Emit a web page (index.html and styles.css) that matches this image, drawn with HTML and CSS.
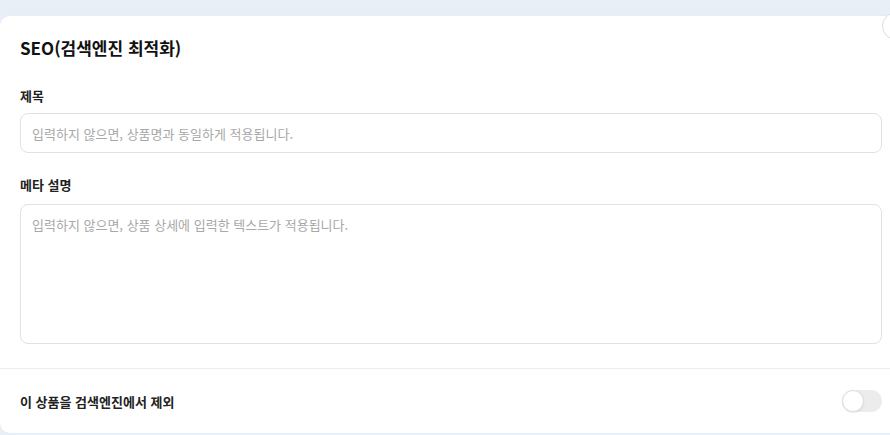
FILE: index.html
```html
<!DOCTYPE html>
<html lang="ko">
<head>
    <meta charset="UTF-8">
    <meta name="viewport" content="width=device-width, initial-scale=1.0">
    <title>SEO 설정</title>
    <link rel="stylesheet" href="styles.css">
</head>
<body>

<div class="page">
    <div class="card">
        <!-- SEO 입력 영역 -->
        <div class="section">
            <h2 class="section-title">SEO(검색엔진 최적화)</h2>

            <label class="field-label" for="seoTitle">제목</label>
            <input class="text-input" id="seoTitle" type="text" placeholder="입력하지 않으면, 상품명과 동일하게 적용됩니다.">

            <label class="field-label meta" for="seoDesc">메타 설명</label>
            <textarea class="text-area" id="seoDesc" placeholder="입력하지 않으면, 상품 상세에 입력한 텍스트가 적용됩니다."></textarea>
        </div>

        <!-- 검색엔진 제외 토글 -->
        <div class="toggle-row">
            <span class="toggle-label">이 상품을 검색엔진에서 제외</span>
            <label class="switch">
                <input type="checkbox">
                <span class="slider"></span>
            </label>
        </div>

        <button class="corner-button" aria-label="닫기"></button>
    </div>
</div>

</body>
</html>
```

FILE: styles.css
```css
html, body {
    margin: 0;
    overflow: hidden;
}

body {
    font-family: "Noto Sans CJK KR", "Noto Sans", sans-serif;
    background-color: #e9eff6;
    color: #1a1a1a;
}

.page {
    padding-top: 16px;
    height: 435px;
    box-sizing: border-box;
}

.card {
    position: relative;
    width: 902px;
    background-color: #fff;
    border-radius: 10px;
    box-shadow: 0 0 2px rgba(0, 0, 0, 0.04);
}

.section {
    padding: 20px 20px 24px;
    border-bottom: 1px solid #ececec;
}

.section-title {
    margin: 0 0 26px;
    font-size: 17px;
    line-height: 24px;
    font-weight: 700;
    color: #111;
}

.field-label {
    display: block;
    font-size: 13px;
    line-height: 20px;
    font-weight: 700;
    color: #222;
    margin-bottom: 7px;
}

.field-label.meta {
    margin-top: 22px;
    margin-bottom: 9px;
}

.text-input,
.text-area {
    display: block;
    width: 100%;
    box-sizing: border-box;
    border: 1px solid #e2e2e2;
    border-radius: 8px;
    padding: 0 11px;
    font-family: inherit;
    font-size: 13px;
    color: #222;
    background: #fff;
    outline: none;
}

.text-input {
    height: 40px;
}

.text-area {
    height: 140px;
    padding-top: 10px;
    resize: none;
}

.text-input::placeholder,
.text-area::placeholder {
    color: #a8a8a8;
}

.toggle-row {
    display: flex;
    align-items: center;
    justify-content: space-between;
    height: 64px;
    padding: 0 20px;
}

.toggle-label {
    font-size: 13px;
    font-weight: 700;
    color: #222;
}

/* Toggle Switch */
.switch {
    position: relative;
    width: 40px;
    height: 22px;
    display: inline-block;
}

.switch input {
    display: none;
}

.slider {
    position: absolute;
    inset: 0;
    background-color: #ececec;
    border-radius: 11px;
    cursor: pointer;
}

.slider::before {
    content: "";
    position: absolute;
    left: 0;
    top: 0;
    width: 20px;
    height: 20px;
    background-color: #fff;
    border: 1px solid #dedede;
    border-radius: 50%;
    box-shadow: 0 1px 2px rgba(0, 0, 0, 0.08);
}

.corner-button {
    position: absolute;
    left: 882px;
    top: -4px;
    width: 28px;
    height: 28px;
    border-radius: 50%;
    border: 1px solid #dcdcdc;
    background-color: #fff;
    padding: 0;
}
```
